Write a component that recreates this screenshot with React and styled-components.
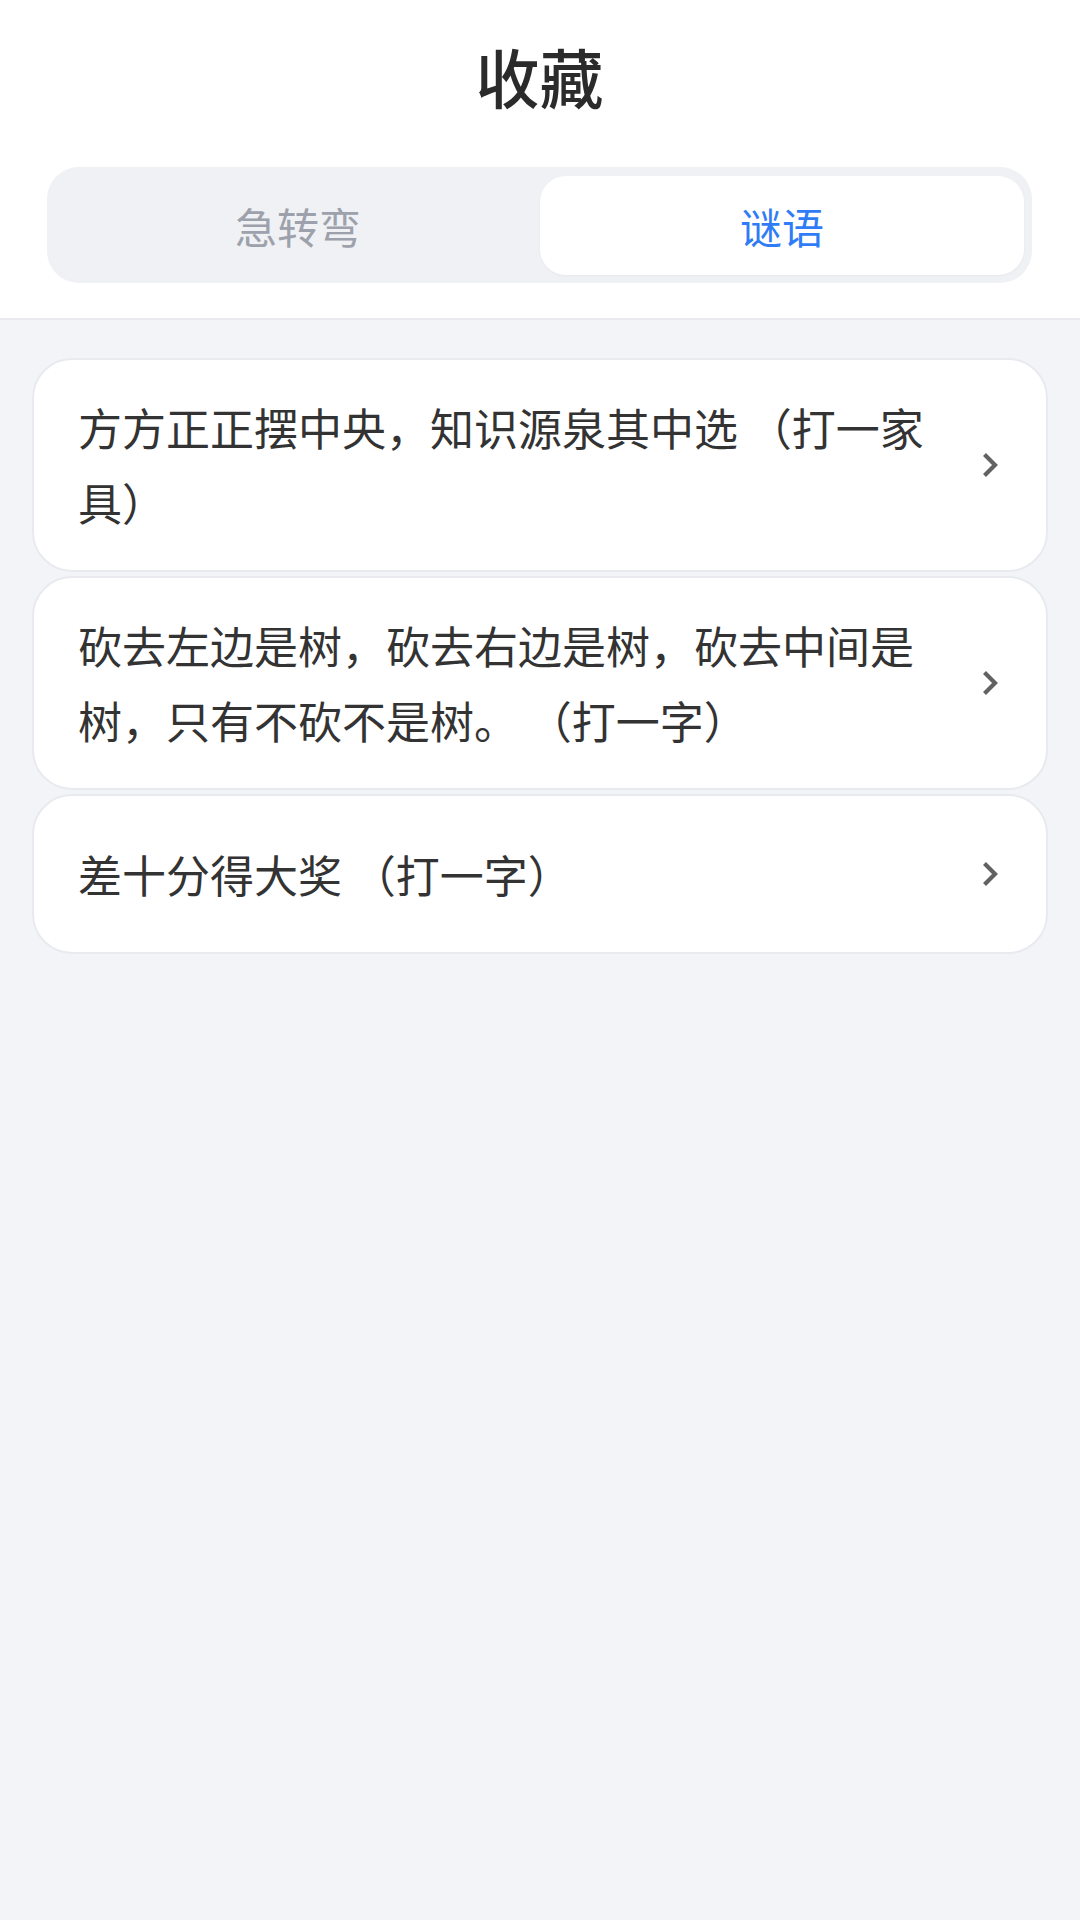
import React, { useState } from "react";
import styled, { createGlobalStyle } from "styled-components";

const Global = createGlobalStyle`
  html, body { margin: 0; padding: 0; }
  body {
    background: #f3f4f8;
    font-family: "Noto Sans CJK SC", "Noto Sans", sans-serif;
    -webkit-font-smoothing: antialiased;
  }
  * { box-sizing: border-box; }
`;

const Page = styled.div`
  min-height: 1920px;
  background: #f3f4f8;
`;

const Header = styled.header`
  background: #ffffff;
  padding: 0 48px 35px 47px;
  border-bottom: 2px solid #e9eaef;
`;

const Title = styled.h1`
  margin: 0;
  height: 150px;
  line-height: 150px;
  text-align: center;
  font-size: 64px;
  font-weight: 500;
  color: #2b2b2b;
`;

const Segment = styled.div`
  margin-top: 17px;
  display: grid;
  grid-template-columns: 1fr 1fr;
  padding: 9px 8px 8px 9px;
  background: #f0f1f5;
  border-radius: 32px;
`;

const Tab = styled.button`
  height: 99px;
  border: none;
  border-radius: 26px;
  background: ${(p) => (p.$active ? "#ffffff" : "transparent")};
  box-shadow: ${(p) => (p.$active ? "0 1px 3px rgba(0,0,0,0.04)" : "none")};
  color: ${(p) => (p.$active ? "#2f7cf6" : "#9ca1ab")};
  font-family: inherit;
  font-size: 42px;
  font-weight: 400;
  cursor: pointer;
  padding: 0;
`;

const List = styled.main`
  display: flex;
  flex-direction: column;
  gap: 4px;
  padding: 38px 32px;
`;

const Card = styled.div`
  display: flex;
  align-items: center;
  gap: 40px;
  min-height: 160px;
  padding: 30px 48px 30px 44px;
  background: #ffffff;
  border: 2px solid #e9eaef;
  border-radius: 40px;
`;

const Riddle = styled.div`
  flex: 1;
  font-size: 44px;
  line-height: 75px;
  color: #333333;
`;

const Chevron = styled.svg`
  flex: none;
  width: 16px;
  height: 26px;
`;

const ChevronIcon = () => (
  <Chevron viewBox="0 0 16 26" fill="none">
    <polyline points="2.5,2.5 13,13 2.5,23.5" stroke="#626262" strokeWidth="4.2" />
  </Chevron>
);

const riddles = [
  "方方正正摆中央，知识源泉其中选 （打一家具）",
  "砍去左边是树，砍去右边是树，砍去中间是树，只有不砍不是树。 （打一字）",
  "差十分得大奖 （打一字）",
];

export default function App() {
  const [tab, setTab] = useState(1);
  return (
    <Page>
      <Global />
      <Header>
        <Title>收藏</Title>
        <Segment>
          <Tab $active={tab === 0} onClick={() => setTab(0)}>急转弯</Tab>
          <Tab $active={tab === 1} onClick={() => setTab(1)}>谜语</Tab>
        </Segment>
      </Header>
      <List>
        {riddles.map((r) => (
          <Card key={r}>
            <Riddle>{r}</Riddle>
            <ChevronIcon />
          </Card>
        ))}
      </List>
    </Page>
  );
}
